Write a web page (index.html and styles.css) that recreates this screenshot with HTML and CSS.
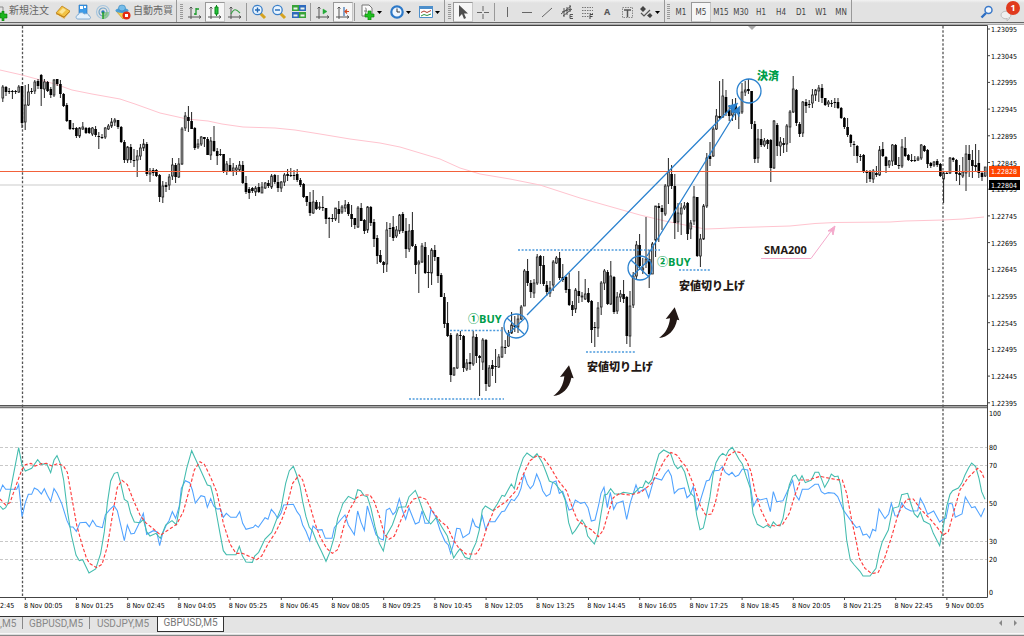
FILE: index.html
```html
<!DOCTYPE html>
<html lang="ja">
<head>
<meta charset="utf-8">
<title>GBPUSD,M5</title>
<link rel="stylesheet" href="styles.css">
</head>
<body>
<header class="toolbar">
  <div class="group first">
    <button class="tool order"><svg width="8" height="18" viewBox="0 0 8 18"><path d="M0 4h3v3" fill="none" stroke="#888"/><path d="M0 10h2V8h2v3h3v4H4v3H2v-3H0z" fill="#1db41d" stroke="#087808" stroke-width=".6"/></svg><span>新規注文</span></button>
    <button class="tool" aria-label="Book"><svg width="16" height="16" viewBox="0 0 16 16"><path d="M1 10 7 3l8 5-6 7z" fill="#c07a10"/><path d="M1 9 7 2l8 5-6 6z" fill="#f3c344" stroke="#b57812" stroke-width=".7"/><path d="M4 8l4-4 3 2-4 4z" fill="#fbe596"/><path d="M2 11l7 3.500 6-6" fill="none" stroke="#fff4c8" stroke-width=".8"/></svg></button>
    <button class="tool" aria-label="Data"><svg width="16" height="16" viewBox="0 0 16 16"><path d="M4 1h8v9H4z" fill="#3d9be8" stroke="#2471bb" stroke-width=".6"/><path d="M5 2h3v3H5zM9 2h2v2H9z" fill="#fff"/><path d="M3 15c-3 0-2-4 0-4 1-3 5-3 6-1 3-1 5 0 5 2 2 0 2 3 0 3z" fill="#e6f1fb" stroke="#6d9fcd" stroke-width=".8"/></svg></button>
    <button class="tool" aria-label="Signals"><svg width="16" height="16" viewBox="0 0 16 16" fill="none"><circle cx="8" cy="8" r="6.500" stroke="#a8c6de" stroke-width="1.200"/><circle cx="8" cy="8" r="4" stroke="#6fa3c9" stroke-width="1.200"/><path d="M8 8v7c4 0 6-3 6-7" fill="#79c179" opacity=".7"/><circle cx="8" cy="8" r="1.700" fill="#2b79b8"/><path d="M8 8v7" stroke="#25a025" stroke-width="1.500"/></svg></button>
    <button class="tool auto"><svg width="16" height="16" viewBox="0 0 16 16"><path d="M1 7 8 15l5-7z" fill="#f4cc4d" stroke="#c08e14" stroke-width=".6"/><ellipse cx="7" cy="6.500" rx="6.500" ry="2.500" fill="#4b9fd8"/><ellipse cx="7" cy="4" rx="3.500" ry="3" fill="#76bdea" stroke="#2e7fb8" stroke-width=".6"/><circle cx="11.500" cy="11.500" r="4" fill="#e22a12"/><path d="M10 10h3v3h-3z" fill="#fff"/></svg><span>自動売買</span></button>
  </div>
  <div class="group">
    <i class="grip"></i>
    <button class="tool" aria-label="Bars"><svg width="16" height="16" viewBox="0 0 16 16" fill="none" stroke="#555"><path d="M4 3v12M1 13h13M2.500 4.500 4 3l1.500 1.500M12 11.500l2 1.500-2 1.500"/><path d="M9 11V4M9 5h3M7 10h2" stroke="#1b9b2b" stroke-width="1.300"/></svg></button>
    <button class="tool on" aria-label="Candles"><svg width="16" height="16" viewBox="0 0 16 16" fill="none" stroke="#555"><path d="M4 3v12M1 13h13M2.500 4.500 4 3l1.500 1.500M12 11.500l2 1.500-2 1.500"/><path d="M9.500 1v11" stroke="#0b8a1b"/><path d="M8 3h3v7H8z" fill="#25c13b" stroke="#0b8a1b"/></svg></button>
    <button class="tool" aria-label="Line"><svg width="16" height="16" viewBox="0 0 16 16" fill="none" stroke="#555"><path d="M4 3v12M1 13h13M2.500 4.500 4 3l1.500 1.500M12 11.500l2 1.500-2 1.500"/><path d="M4 10c3-6 5-5 9-1" stroke="#3ba248" stroke-width="1.200"/></svg></button>
    <i class="sep"></i>
    <button class="tool" aria-label="Zoom in"><svg width="16" height="16" viewBox="0 0 16 16"><path d="M9 9l5 5" stroke="#d7a320" stroke-width="3"/><circle cx="6.500" cy="6" r="4.700" fill="#e8f4ff" stroke="#3b7fc8" stroke-width="1.300"/><path d="M4 6h5M6.500 3.500v5" stroke="#2468b4" stroke-width="1.400"/></svg></button>
    <button class="tool" aria-label="Zoom out"><svg width="16" height="16" viewBox="0 0 16 16"><path d="M9 9l5 5" stroke="#d7a320" stroke-width="3"/><circle cx="6.500" cy="6" r="4.700" fill="#e8f4ff" stroke="#3b7fc8" stroke-width="1.300"/><path d="M4 6h5" stroke="#2468b4" stroke-width="1.400"/></svg></button>
    <button class="tool" aria-label="Tile"><svg width="16" height="16" viewBox="0 0 16 16"><path d="M1 1h7v6H1zM8 8h7v6H8z" fill="#39a339"/><path d="M8 1h7v6H8zM1 8h7v6H1z" fill="#2d69bd"/><path d="M2.500 3.500h4v2h-4zM9.500 3.500h4v2h-4zM2.500 10.500h4v2h-4zM9.500 10.500h4v2h-4z" fill="#e9f3ea"/></svg></button>
    <i class="sep"></i>
    <button class="tool" aria-label="Auto scroll"><svg width="16" height="16" viewBox="0 0 16 16" fill="none" stroke="#555"><path d="M4 3v12M1 13h13M2.500 4.500 4 3l1.500 1.500M12 11.500l2 1.500-2 1.500"/><path d="M8 5v5l4-2.500z" fill="#22a836" stroke="#22a836" stroke-width=".5"/></svg></button>
    <button class="tool on" aria-label="Chart shift"><svg width="16" height="16" viewBox="0 0 16 16" fill="none" stroke="#555"><path d="M4 3v12M1 13h13M2.500 4.500 4 3l1.500 1.500M12 11.500l2 1.500-2 1.500"/><path d="M9 3v9" stroke="#3772b6" stroke-width="1.200"/><path d="M14 7.500h-4M12 5.500l-2 2 2 2" stroke="#d2481e" stroke-width="1.200"/></svg></button>
    <i class="sep"></i>
    <button class="tool drop" aria-label="Indicators"><svg width="28" height="16" viewBox="0 0 28 16"><path d="M5 1h7l3 3v8H5z" fill="#fafafa" stroke="#777"/><path d="M8 4c2-1 1 6 0 6M7 7h3" fill="none" stroke="#777"/><path d="M11 7h3v3h3v3h-3v3h-3v-3H8v-3h3z" fill="#1fc01f" stroke="#0a860a" stroke-width=".7"/><path d="M20 7h5l-2.500 3z"/></svg></button>
    <button class="tool drop" aria-label="Periods"><svg width="28" height="16" viewBox="0 0 28 16"><circle cx="11" cy="8" r="5.700" fill="#eef6ff" stroke="#2d79c8" stroke-width="2.200"/><path d="M11 4.500V8h3" fill="none" stroke="#333"/><path d="M20 7h5l-2.500 3z"/></svg></button>
    <button class="tool drop" aria-label="Templates"><svg width="28" height="16" viewBox="0 0 28 16"><path d="M4.500 2.500h13v11h-13z" fill="#fff" stroke="#4d8fcb"/><path d="M4 2h14v3H4z" fill="#4d8fcb"/><path d="M6 8.500l3-1.500 3 1.500 4-2" fill="none" stroke="#b03a2a"/><path d="M6 12l3-1.500 3 1 4-1.500" fill="none" stroke="#2c9544"/><path d="M20 7h5l-2.500 3z"/></svg></button>
  </div>
  <div class="group">
    <i class="grip"></i>
    <button class="tool on" aria-label="Cursor"><svg width="16" height="16" viewBox="0 0 16 16"><path d="M4 1v12l3-3 2 5 2-1-2-4.500h4z" fill="#4d4d4d"/></svg></button>
    <button class="tool" aria-label="Crosshair"><svg width="16" height="16" viewBox="0 0 16 16" stroke="#666"><path d="M8 2v5M8 10v5M2 8.500h5M9 8.500h5"/></svg></button>
    <i class="sep"></i>
    <button class="tool" aria-label="Vertical line"><svg width="16" height="16" viewBox="0 0 16 16" stroke="#666"><path d="M8.500 3v10"/></svg></button>
    <button class="tool" aria-label="Horizontal line"><svg width="16" height="16" viewBox="0 0 16 16" stroke="#666"><path d="M3 8.500h10"/></svg></button>
    <button class="tool" aria-label="Trend line"><svg width="16" height="16" viewBox="0 0 16 16" stroke="#666"><path d="M3 13 13 4"/></svg></button>
    <button class="tool" aria-label="Channel"><svg width="16" height="16" viewBox="0 0 16 16" fill="none" stroke="#555"><path d="M2 10 12 2M4 12 13 5M5 4v9M8 3v8M11 1v7M3 8l9-3"/><path d="M14 10.500h-3v4h3M11 12.500h2.500"/></svg></button>
    <button class="tool" aria-label="Fibonacci"><svg width="16" height="16" viewBox="0 0 16 16" fill="none" stroke="#777"><path d="M3 3.500h11M3 6.500h11M3 9.500h11M3 12.500h7" stroke-dasharray="1.500 1"/><path d="M14 10.500h-3v4.500M11 12.500h2.500" stroke="#444"/></svg></button>
    <button class="tool letter">A</button>
    <button class="tool" aria-label="Label"><svg width="16" height="16" viewBox="0 0 16 16" fill="none" stroke="#888"><path d="M3.500 3.500h10v10h-10z" stroke-dasharray="1.500 1"/><path d="M5 6h7M8.500 6v7" stroke="#555" stroke-width="1.500"/></svg></button>
    <button class="tool drop narrow" aria-label="Arrows"><svg width="27" height="16" viewBox="0 0 27 16"><path d="M6 2l3 3-3 3-3-3zM13 9l2.500 2.500L13 14l-3-2.500z" fill="#444"/><path d="M4 9l3 3 6-6" fill="none" stroke="#555" stroke-width="1.200"/><path d="M18 7h5l-2.500 3z"/></svg></button>
  </div>
  <div class="group periods">
    <i class="grip"></i>
    <button class="tool">M1</button><button class="tool on">M5</button><button class="tool">M15</button><button class="tool">M30</button><button class="tool">H1</button><button class="tool">H4</button><button class="tool">D1</button><button class="tool">W1</button><button class="tool">MN</button>
  </div>
  <div class="extras">
    <button class="tool" aria-label="Search"><svg width="16" height="16" viewBox="0 0 16 16" fill="none"><path d="M7 9l-4.500 4.500" stroke="#2f6fc4" stroke-width="2.400"/><circle cx="9.500" cy="6" r="3.500" fill="#f4f9ff" stroke="#3b79c9" stroke-width="1.500"/></svg></button>
    <button class="tool notice"><svg width="18" height="18" viewBox="0 0 18 18"><ellipse cx="6" cy="12" rx="5" ry="3.800" fill="#eee" stroke="#aaa" stroke-width=".7"/><path d="M7 15v3l3-3" fill="#ddd" stroke="#aaa" stroke-width=".5"/></svg><span class="badge">1</span></button>
  </div>
</header>

<main class="workspace">
<svg class="chart" viewBox="0 25 1024 591" role="img" aria-label="GBPUSD M5">
  <path class="frame" d="M0 25.500H987.500V597.500M0 597.500H987.500"/>
  <path d="M748 26h8l-4 4z" fill="#aaa"/>
  <g class="levels"><path d="M0 447.500H987M0 465.500H987M0 502.500H987M0 541.500H987M0 559.500H987"/></g>
  <path class="day" d="M22.500 26V597M943 26V597"/>
  <path d="M0 185H987" stroke="#dcdcdc" stroke-width="1.500"/>
  <polyline class="sma" points="0,70 22,75 55,84 72,90 92,94 120,99 135,104 160,113 187,119 208,121 222,124 243,127 275,128 295,130 320,134 350,139 380,143 400,147 420,153 440,159 460,168 480,174 510,179 540,185 580,198 640,215 665,221 690,226 705,229 720,228.500 740,227.500 790,226 815,223.500 835,222.500 890,222 905,221 943,220 963,219 984,217"/>
  <g id="candles"></g>
  <rect class="ask" x="0" y="171" width="987" height="1"/>
  <path d="M0 405.700H987" stroke="#555" stroke-width="1.400"/><path d="M0 407.600H987" stroke="#777" stroke-width="1.200"/>

  <g transform="translate(0 400) scale(.33333)">
    <g class="blue">
      <polyline points="0,275 8,255 17,268 50,268 56,254 66,350 76,308 85,283 95,283 103,264 113,269 124,282 133,266 142,286 152,304 162,266 171,280 185,310 201,362 210,381 219,381 229,394 240,368 258,367 268,380 278,361 289,378 307,383 316,345 330,328 342,317 352,332 373,422 382,375 393,402 403,400 415,375 430,340 440,403 460,392 470,395 479,437 488,400 500,373 507,362 517,335 527,355 538,318 544,265 556,242 569,248 577,270 586,309 603,287 614,290 622,322 632,296 641,318 651,327 661,326 670,352 679,340 692,352 709,352 719,335 728,370 738,388 760,382 766,375 775,382 795,353 804,358 814,328 824,340 833,355 843,340 851,315 880,313 891,335 900,347 908,375 918,394 929,422 939,378 952,390 966,389 976,415 996,415 1003,383 1024,357"/>
      <polyline transform="translate(1020 90)" points="4,267 15,255 25,285 43,314 53,243 63,277 73,301 82,228 92,262 108,314 120,326 130,330 139,240 149,235 159,254 167,245 178,206 187,240 197,268 207,234 226,282 237,277 246,243 255,280 266,280 273,238 288,262 300,300 315,334 325,345 332,370 341,340 350,295 360,296 369,323 388,310 398,268 406,288 417,294 427,258 437,299 447,275 465,275 485,245 494,243 514,208 523,212 535,195 543,175 552,132 562,162 571,176 580,165 590,132 600,155 608,182 619,199 630,192 638,157 648,153 658,190 668,184 687,240 696,237 706,210 722,220 734,217 744,233 754,273 765,270 776,225 783,190 792,172 802,233 811,187 821,238 830,220 849,213 860,268 871,218 888,165 896,187 916,175 926,203 943,143 965,150 975,132 985,120 994,138 1003,190 1015,178 1033,174 1041,203 1050,195"/>
      <polyline transform="translate(2040 0)" points="30,285 40,260 50,332 60,305 79,243 88,240 99,213 117,211 127,200 136,217 147,225 156,217 166,230 176,225 187,207 203,210 213,270 221,318 232,295 240,300 260,295 271,335 280,275 290,305 309,302 328,262 338,241 347,285 357,300 367,268 385,268 405,253 415,253 424,275 434,282 445,278 463,280 473,290 490,330 510,358 529,383 539,379 549,405 560,402 569,414 578,388 587,393 597,327 615,356 626,342 634,310 645,347 654,348 665,309 677,325 693,333 713,332 721,295 732,315 743,343 761,333 779,366 790,358 798,355 807,310 817,312 826,352 846,342 856,291 875,323 885,320 903,350 914,325"/>
    </g>
    <g class="teal">
      <polyline points="0,318 9,328 17,323 24,310 33,262 45,200 56,143 66,195 76,213 95,205 113,179 124,193 140,191 152,218 162,180 171,167 181,191 191,240 203,338 214,405 228,465 238,482 248,479 258,500 267,519 287,507 302,460 313,395 322,310 332,243 343,220 353,217 361,245 373,298 383,305 392,340 403,366 420,368 430,358 440,395 450,408 468,400 481,415 497,375 516,362 529,374 537,330 547,265 560,205 575,152 584,172 603,213 622,255 632,258 640,290 650,345 660,400 670,452 679,464 708,464 718,439 727,467 738,486 757,487 764,468 776,457 795,417 815,397 833,350 843,325 857,250 868,212 880,199 889,222 900,258 908,305 918,350 928,382 938,394 949,422 965,455 978,484 989,458 1003,410 1013,355 1024,325"/>
      <polyline transform="translate(1020 90)" points="4,235 8,222 25,199 45,209 53,179 62,182 72,197 82,200 93,235 105,290 118,340 130,363 140,315 157,285 176,232 197,230 207,200 226,181 236,205 248,240 260,268 272,282 289,262 305,290 322,318 332,352 341,384 352,367 360,356 375,382 389,387 397,362 408,338 418,300 427,240 436,228 459,242 472,222 486,196 494,199 514,162 523,176 533,132 550,83 561,69 580,83 591,71 607,98 618,126 628,153 645,160 667,188 676,212 686,278 697,312 706,301 726,270 735,284 743,318 763,342 773,315 783,252 793,195 801,193 812,176 824,192 840,192 850,187 880,192 900,172 908,173 917,153 926,161 936,148 947,105 957,72 971,60 992,71 1003,103 1013,116 1024,108 1034,126 1043,160 1050,187"/>
      <polyline transform="translate(2040 0)" points="30,277 42,290 50,345 60,389 70,384 80,340 90,290 99,225 108,188 118,170 128,160 138,167 146,151 157,142 167,160 177,178 187,192 199,230 211,265 219,340 232,373 250,383 261,376 271,383 280,366 290,376 300,378 309,355 319,300 328,255 338,229 347,225 357,243 366,227 376,248 394,240 405,217 416,217 425,238 434,262 445,243 454,222 464,230 474,228 482,255 491,330 500,420 511,480 523,495 540,514 549,528 570,528 588,505 597,460 607,425 625,390 638,325 656,320 665,284 683,280 694,315 703,342 713,352 721,336 731,363 750,373 760,400 779,437 790,380 800,320 810,283 818,272 835,264 845,250 855,225 866,203 875,189 887,200 897,235 905,275 915,298"/>
    </g>
    <g class="red">
      <polyline points="0,297 17,315 30,308 45,265 66,208 76,194 93,190 105,198 124,191 140,190 155,198 173,191 190,197 202,217 215,290 230,375 245,430 258,470 268,490 290,503 306,493 322,440 340,330 352,262 366,241 382,254 400,300 420,345 437,368 458,385 482,405 500,393 530,373 550,335 570,262 583,210 600,185 613,193 632,232 650,275 660,320 670,370 690,432 708,460 727,460 755,472 770,479 785,468 805,430 825,400 845,360 860,320 878,250 897,225 908,240 925,300 945,370 960,410 980,445 997,460 1012,450 1022,425"/>
      <polyline transform="translate(1020 90)" points="2,325 15,275 30,237 50,203 65,195 90,195 103,215 118,258 133,313 147,328 163,318 183,270 200,235 220,208 240,201 258,208 275,240 300,272 322,290 340,330 355,352 378,372 408,372 422,352 440,295 462,240 500,213 530,180 550,133 570,92 591,77 610,83 630,110 655,152 680,183 697,233 712,270 735,288 755,300 775,320 790,300 805,248 820,203 838,191 870,195 903,187 935,160 955,125 975,88 993,67 1010,75 1020,87"/>
      <polyline transform="translate(2040 0)" points="0,180 18,200 30,228 45,265 60,315 77,345 95,342 108,300 125,215 145,167 165,154 183,158 200,182 213,215 225,275 243,330 265,375 285,378 308,373 328,340 345,285 362,240 385,240 420,229 470,239 487,240 500,280 515,360 530,430 538,475 555,505 575,521 595,517 612,480 635,410 655,340 680,298 700,297 720,325 755,362 790,405 805,395 820,340 840,270 865,232 893,205 905,217 913,236"/>
    </g>
  </g>

  <g class="marks">
    <path class="dots" d="M409 399H504M450 330.500H504M518 250H660M586 352H635M679 270H710"/>
    <circle cx="516" cy="326" r="12"/><circle cx="640" cy="268" r="12"/><circle cx="749" cy="91" r="12"/>
    <path d="M507 318 524 334M525 318 507 335M631 260 649 277M649 260 631 277M527 315 731 108M647 256 736 112"/>
    <path class="head" d="M738 103l-10 3 3 2 1 5zM740 106l-8 6 5 1 2 4z"/>
  </g>
  <g class="pink"><path d="M761 258.500H811L832 230"/><path d="M835 226l-7 5 4 0 1 4z" fill="#f4a9cb"/></g>
  <g class="swoosh">
    <path transform="translate(540 140) scale(.33333)" d="M40 768C65 766 89 745 94 713L101 715 87 676 60 711 73 709C70 735 60 754 40 768Z"/>
    <path transform="translate(645.700 82) scale(.33333)" d="M40 768C65 766 89 745 94 713L101 715 87 676 60 711 73 709C70 735 60 754 40 768Z"/>
  </g>
  <g class="buy"><text x="757" y="80" class="heavy">決済</text><text x="468" y="323">①BUY</text><text x="657" y="266">②BUY</text></g>
  <g class="note"><text x="587" y="371" class="heavy">安値切り上げ</text><text x="679" y="290" class="heavy">安値切り上げ</text><text x="764" y="254">SMA200</text></g>
  <g id="axes" class="axes"></g>
  <path d="M989 166h31v11h-31z" fill="#ff4500"/><path d="M989 180h31v10h-31z"/>
  <g class="tags"><text x="991" y="174">1.22828</text><text x="991" y="188">1.22804</text></g>
</svg>
</main>

<footer class="tabs">
  <nav class="tablist">
    <button class="tab cut">,M5</button><button class="tab">GBPUSD,M5</button><button class="tab last">USDJPY,M5</button><button class="tab active">GBPUSD,M5</button>
  </nav>
  <div class="scroll"><button aria-label="Previous"><svg width="5" height="6" viewBox="0 0 5 6"><path d="M4 0v6L1 3z" fill="#888"/></svg></button><button aria-label="Next"><svg width="5" height="6" viewBox="0 0 5 6"><path d="M1 0v6l3-3z" fill="#888"/></svg></button></div>
</footer>
<script src="chart.js"></script>
</body>
</html>
```
FILE: styles.css
```css
* { box-sizing: border-box; }
body { margin: 0; min-height: 100vh; display: flex; flex-direction: column; background: #e4e4e4; font-family: "Noto Sans", "Noto Sans CJK JP", sans-serif; }
button { margin: 0; padding: 0; border: 0; background: none; font: inherit; color: inherit; }

.toolbar { display: flex; height: 25px; padding-bottom: 2px; background: linear-gradient(#f2f2f2, #e2e2e2 3px 22px, #666 22px 23px, #d4d4d4 23px); border-bottom: 1px solid #aaa; }
.group { display: flex; align-items: center; padding: 2px 0 1px; border-right: 1px solid #999; }
.group.first { padding-right: 3px; }
.tool { flex: none; width: 20px; height: 20px; display: flex; align-items: center; justify-content: center; }
.order { width: 53px; justify-content: flex-start; gap: 1px; }
.auto { width: 60px; justify-content: flex-start; padding-left: 2px; gap: 2px; }
.order span, .auto span { font: 10px/16px "Noto Sans CJK JP", sans-serif; color: #666; white-space: nowrap; padding-bottom: 3px; }
.drop { width: 29px; justify-content: flex-start; }
.drop.narrow { width: 27px; }
.on { background: #f6f6f6; border: 1px solid #c6c6c6; border-top-color: #999; border-left-color: #999; }
.grip { width: 8px; height: 16px; background: repeating-linear-gradient(#999 0 1px, transparent 1px 2px) 3px 0 / 3px 16px no-repeat; }
.sep { width: 4px; height: 18px; background: linear-gradient(#999, #999) 1px 0 / 1px 18px no-repeat; }
.letter { font: bold 9px "Noto Sans", sans-serif; color: #555; }
.periods { font: 8px "DejaVu Sans Condensed", "DejaVu Sans", sans-serif; color: #444; }
.periods .grip { width: 6px; background-position-x: 2px; }
.periods .tool { padding-top: 2px; }
.extras { display: flex; gap: 2px; margin-left: auto; padding: 2px 5px 0 0; }
.notice { position: relative; }
.badge { position: absolute; top: -1px; right: -1px; width: 14px; height: 14px; border-radius: 7px; background: #e03a1e; color: #fff; font: bold 9px/14px "Noto Sans", sans-serif; text-align: center; }

.workspace { background: #fff; }
.chart { display: block; width: 100%; height: auto; }
.chart polyline { fill: none; }
.frame { fill: none; stroke: #444; }
.levels { stroke: #c8c8c8; stroke-dasharray: 3 2; }
.day { stroke: #555; stroke-width: 1.3; stroke-dasharray: 2.5 1.8; fill: none; }
.sma { stroke: #ffc4cf; }
.ask { fill: #f2613a; }
.wick { stroke: #222; stroke-width: 1; }
.down { fill: #000; }
.up { fill: #b4b4b4; stroke: #222; stroke-width: .8; }
.blue { stroke: #4fa2ff; stroke-width: 3.2; }
.teal { stroke: #43bcae; stroke-width: 3.2; }
.red { stroke: #ff3c3c; stroke-width: 3.4; stroke-dasharray: 10 6; }
.marks { fill: none; stroke: #2b82cf; stroke-width: 1.3; }
.marks .dots { stroke: #4c9add; stroke-dasharray: 2 1.6; }
.marks .head { fill: #2b82cf; stroke-width: .5; }
.pink { fill: none; stroke: #f4a9cb; }
.swoosh { fill: #231815; }
.buy, .note { font: bold 11px "Open Sans", "Noto Sans CJK JP", sans-serif; }
.heavy { font-weight: 900; }
.buy { fill: #009d4a; }
.note { fill: #231815; }
.axes, .tags { font: 7px "DejaVu Sans Condensed", "DejaVu Sans", sans-serif; fill: #000; }
.axes path { stroke: #444; fill: none; }
.tags { fill: #fff; }

.tabs { flex: 1; display: flex; justify-content: space-between; align-items: flex-start; border-top: 1px solid #333; border-bottom: 1px solid #888; background: linear-gradient(#e4e4e4 16px, #f8f8f8 16px 17px, #ddd 17px); font: 10px "Liberation Sans Narrow", "Roboto", sans-serif; color: #888; }
.tablist { display: flex; }
.tab { height: 12px; width: 67px; line-height: 11px; text-align: center; border-right: 1px solid #888; }
.cut { width: 23px; text-align: left; }
.last { border-right-color: transparent; }
.active { height: 15px; padding-bottom: 3px; background: #fff; border: 1px solid #333; border-top: 0; color: #777; }
.scroll { display: flex; gap: 10px; padding: 3px 6px 0 0; line-height: 0; }
```
FILE: chart.js
```js
// high, body top, body bottom, low; "u" marks a rising bar
const bars = `85 87 98 102 u|86 87 92 96|88 91 92 94|90 91 92 99|90 91 92 94|85 87 92 93 u|86 86 123 128|85 105 122 130 u|84 92 105 106 u|88 91 92 94|80 82 91 94 u|79 81 86 89|74 75 89 106|79 82 89 98 u|81 82 91 92|87 89 95 98|79 80 95 97 u|79 79 84 86|80 84 94 98|93 94 106 107|103 105 121 122|120 120 129 130|123 128 129 130|127 128 136 138|127 128 136 138 u|122 127 129 130 u|127 128 133 134|127 128 133 134|127 128 134 136 u|126 129 135 137|132 136 137 149|134 137 138 139|127 128 137 139 u|124 126 129 130 u|118 122 126 128 u|118 120 122 126 u|120 120 127 129|126 127 142 143|140 142 160 163|146 147 160 163 u|144 147 160 163|149 160 161 167|150 156 160 177 u|144 148 156 160 u|139 144 148 151 u|142 144 174 176|168 171 174 182 u|168 170 173 176|169 170 176 177|174 175 197 202|181 186 197 203 u|182 185 187 192|174 177 185 190 u|158 165 176 180 u|163 165 177 183|158 164 177 178 u|127 129 164 165 u|112 116 128 131 u|106 117 121 132|112 121 129 129|127 128 148 150|139 144 147 149 u|136 137 144 146 u|137 137 139 147|137 139 155 155|137 141 155 160 u|126 141 151 152|148 151 156 165|149 154 155 156|154 154 172 173|161 164 171 175 u|158 165 171 172|163 168 171 176 u|165 168 170 175 u|161 165 170 172 u|161 165 183 184|176 183 192 194|187 189 193 199|187 188 191 193|186 188 192 196 u|183 187 192 193
182 187 193 193 u|182 183 188 189 u|180 183 186 188|174 176 187 189 u|174 175 182 184|175 182 188 192|181 182 188 192 u|173 175 182 186 u|169 174 176 181|168 175 176 177|170 175 176 180|169 174 180 182|178 180 185 187|183 184 197 198|196 196 202 206|192 202 213 216|190 202 213 214 u|200 202 209 210|202 207 208 210 u|196 207 208 211|208 208 219 224|217 218 219 238|214 218 219 222|208 208 219 221 u|201 209 214 223|205 207 212 214 u|200 205 208 212 u|202 204 214 216|205 214 219 227|218 218 225 229|206 208 227 228 u|203 208 221 221|219 220 231 234|206 207 230 233 u|206 207 223 226|219 222 239 247|235 238 256 264|250 255 262 263|261 262 265 273|222 230 264 272 u|223 228 229 237|216 227 238 241|226 230 236 238 u|214 215 231 234 u|212 214 231 233|218 231 249 258|224 231 249 252 u|212 230 246 247|244 246 265 274|260 262 264 293 u|243 246 262 263 u|242 247 273 274|255 272 273 288|248 250 273 285 u|245 250 257 261|257 257 276 283|273 275 297 297|293 297 324 328|302 323 336 337
333 335 375 382|367 368 375 376 u|333 335 368 369 u|331 335 336 340|335 336 368 372|359 363 369 371 u|353 362 364 370|331 337 364 366 u|334 337 356 363|355 356 358 396|338 340 362 370 u|339 340 384 391|365 368 386 387 u|360 365 369 376|349 366 367 383|354 357 367 368 u|327 347 357 358 u|340 347 348 354|330 334 346 347 u|312 325 333 334 u|316 325 327 332|315 319 327 333 u|305 307 319 320 u|269 271 306 306 u|259 271 283 286|280 283 292 298|279 283 293 298 u|254 257 283 285 u|255 256 266 284|256 265 284 286|281 285 292 296|281 288 293 297 u|260 262 285 291 u|256 258 263 264 u|252 258 278 280|264 277 280 282|276 277 290 293|273 289 305 306|301 305 310 316|288 290 309 313 u
271 291 296 303|292 296 297 302 u|279 294 299 300 u|288 293 302 303|300 301 330 343|322 327 328 347|302 308 328 337 u|281 283 307 315 u|269 271 283 290 u|270 272 304 305|261 276 304 305 u|276 277 312 314|292 297 311 314 u|290 294 297 302 u|280 294 299 303|296 297 336 344|291 306 336 347 u|272 276 305 308 u|241 245 276 279 u|234 245 266 270|258 268 270 274 u|217 259 263 268 u|250 259 274 288|242 244 274 274 u|206 206 240 257 u|203 206 208 242|205 208 212 230|184 186 214 216 u|158 172 186 204 u|165 174 186 189|174 186 223 239|203 213 222 232 u|203 208 214 235 u|202 206 208 210 u|202 203 234 240|220 223 229 239 u|186 197 221 225 u|197 197 256 257|234 239 256 267 u|204 206 239 240 u|153 158 206 208 u
142 156 159 166|127 129 156 157 u|109 116 129 130 u|81 116 118 119|79 96 117 118 u|90 97 113 116|105 110 116 121|99 108 115 121 u|98 104 113 120|108 112 114 129|83 92 112 114 u|81 90 92 96 u|79 89 91 94|91 91 124 129|121 124 159 163|129 139 158 163 u|129 139 145 147|138 141 145 147 u|139 140 144 149|139 140 168 182|120 121 168 169 u|123 125 146 156|137 142 146 156 u|138 143 145 153|124 126 144 152 u|110 112 127 143 u|76 89 112 113 u|89 90 123 126|122 124 134 137|101 102 133 137 u|99 102 106 113|100 104 105 108|89 95 103 108 u|89 90 95 101 u|85 88 91 102 u|84 88 98 103|98 98 105 106|100 102 104 107 u|100 103 104 107|98 102 103 108|98 102 108 109|107 108 118 119|117 118 127 129|118 127 135 137|134 135 143 147|141 144 145 156|145 146 156 163|154 156 157 161|154 155 172 173|170 171 173 183|170 171 179 182|169 171 179 183 u
166 173 175 177|146 150 175 176 u|142 149 156 157|156 157 166 173|160 161 165 168 u|144 145 161 166 u|144 145 165 165|157 165 166 169|139 147 166 168 u|137 148 156 157|154 155 160 161|154 160 161 162|156 160 161 162|156 158 160 161 u|144 145 158 160 u|145 146 151 152|149 150 164 168|162 163 166 168|161 162 165 167 u|159 161 165 167|163 164 176 177|171 173 179 203 u|172 173 174 174|157 158 173 174 u|157 158 160 162|159 160 174 181|165 173 175 185|157 172 176 178 u|145 154 173 191 u|145 154 160 177|150 160 166 178|144 165 167 171|150 163 173 178|172 173 177 181|167 167 176 177 u`.split(/[|\n]/);

document.getElementById("candles").innerHTML = bars.map((bar, i) => {
  const [high, top, bottom, low, rising] = bar.trim().split(" ");
  const x = 2.8 + 3.2 * i;
  const h = Math.max(1, bottom - top);
  const body = rising
    ? `<rect class="up" x="${x - 0.9}" y="${top}" width="1.8" height="${h}"/>`
    : `<rect class="down" x="${x - 1.3}" y="${top}" width="2.6" height="${h}"/>`;
  return `<path class="wick" d="M${x} ${high}V${low}"/>${body}`;
}).join("");

let axes = "";
let ticks = "";
for (let k = 0; k < 15; k++) {
  const y = 29 + 26.7 * k;
  ticks += `M988 ${y}h2`;
  axes += `<text x="991" y="${y + 3}">${(1.23095 - 0.0005 * k).toFixed(5)}</text>`;
}
for (const [label, y] of [[100, 413], [80, 447], [70, 465], [50, 503], [30, 541], [20, 559], [0, 592]]) {
  axes += `<text x="989" y="${y + 3}">${label}</text>`;
}
axes += `<text x="0" y="608">2:45</text>`;
for (let k = 0; k < 19; k++) {
  const minutes = (5 + 80 * k) % 1440;
  const time = [Math.floor(minutes / 60), minutes % 60].map(n => String(n).padStart(2, "0")).join(":");
  const x = 24 + 51.2 * k;
  ticks += `M${x + 1.3} 598v2`;
  axes += `<text x="${x}" y="608">${k < 18 ? 8 : 9} Nov ${time}</text>`;
}
document.getElementById("axes").innerHTML = `<path d="${ticks}"/>${axes}`;
```
